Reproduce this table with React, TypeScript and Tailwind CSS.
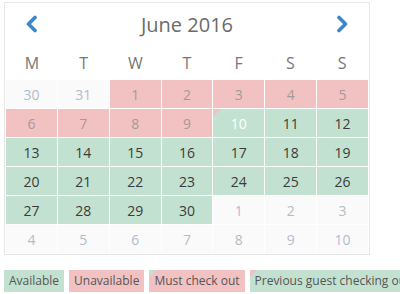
import React from "react";

type Kind = "other" | "unavail" | "avail" | "prevout";
type Cell = { d: number; k: Kind };

const rows: Cell[][] = [
  [
    { d: 30, k: "other" },
    { d: 31, k: "other" },
    { d: 1, k: "unavail" },
    { d: 2, k: "unavail" },
    { d: 3, k: "unavail" },
    { d: 4, k: "unavail" },
    { d: 5, k: "unavail" },
  ],
  [
    { d: 6, k: "unavail" },
    { d: 7, k: "unavail" },
    { d: 8, k: "unavail" },
    { d: 9, k: "unavail" },
    { d: 10, k: "prevout" },
    { d: 11, k: "avail" },
    { d: 12, k: "avail" },
  ],
  [13, 14, 15, 16, 17, 18, 19].map((d) => ({ d, k: "avail" as Kind })),
  [20, 21, 22, 23, 24, 25, 26].map((d) => ({ d, k: "avail" as Kind })),
  [
    { d: 27, k: "avail" },
    { d: 28, k: "avail" },
    { d: 29, k: "avail" },
    { d: 30, k: "avail" },
    { d: 1, k: "other" },
    { d: 2, k: "other" },
    { d: 3, k: "other" },
  ],
  [4, 5, 6, 7, 8, 9, 10].map((d) => ({ d, k: "other" as Kind })),
];

function DayCell({ c }: { c: Cell }) {
  if (c.k === "other")
    return (
      <div className="h-[28px] flex items-center justify-center bg-[#fafafa] text-[#b3bccb]">
        {c.d}
      </div>
    );
  if (c.k === "unavail")
    return (
      <div className="h-[28px] flex items-center justify-center bg-[#f2c2c2] text-[#a59a9a]">
        {c.d}
      </div>
    );
  if (c.k === "prevout")
    return (
      <div className="relative h-[28px] flex items-center justify-center bg-[#c3e1d0] text-white overflow-hidden">
        <div className="absolute left-0 top-0 w-0 h-0 border-t-[8px] border-t-[#f2c2c2] border-r-[8px] border-r-transparent" />
        <span className="relative">{c.d}</span>
      </div>
    );
  return (
    <div className="h-[28px] flex items-center justify-center bg-[#c3e1d0] text-[#3b3b3b]">
      {c.d}
    </div>
  );
}

export default function App() {
  return (
    <div
      className="bg-white w-[400px] h-[294px] overflow-hidden pt-[2px] pl-[4px]"
      style={{ fontFamily: '"Open Sans", sans-serif' }}
    >
      <div className="w-[366px] border border-[#e6e6e6] p-[1px] pt-0">
        <div className="h-[42px] flex items-center justify-between px-[19px]">
          <svg width="14" height="18" viewBox="0 0 14 18">
            <polyline
              points="10,2.5 3.5,9 10,15.5"
              fill="none"
              stroke="#3c87c9"
              strokeWidth="3.6"
              strokeLinecap="round"
              strokeLinejoin="round"
            />
          </svg>
          <div className="text-[20px] text-[#6b6b6b] leading-none pt-[2px]">June 2016</div>
          <svg width="14" height="18" viewBox="0 0 14 18">
            <polyline
              points="4,2.5 10.5,9 4,15.5"
              fill="none"
              stroke="#3c87c9"
              strokeWidth="3.6"
              strokeLinecap="round"
              strokeLinejoin="round"
            />
          </svg>
        </div>
        <div className="h-[35px] grid grid-cols-7 items-center text-center text-[16px] text-[#777]">
          {["M", "T", "W", "T", "F", "S", "S"].map((d, i) => (
            <div key={i}>{d}</div>
          ))}
        </div>
        <div className="grid grid-cols-7 gap-px text-[14px]">
          {rows.flat().map((c, i) => (
            <DayCell key={i} c={c} />
          ))}
        </div>
      </div>
      <div className="mt-[15px] flex gap-[5px] text-[12px] text-[#555] whitespace-nowrap">
        <div className="shrink-0 h-[22px] px-[5px] flex items-center bg-[#c3e1d0]">Available</div>
        <div className="shrink-0 h-[22px] px-[5px] flex items-center bg-[#f2c2c2]">Unavailable</div>
        <div className="shrink-0 relative h-[22px] px-[5px] flex items-center bg-[#f2c2c2] overflow-hidden">
          <div className="absolute left-0 top-0 w-0 h-0 border-t-[7px] border-t-[#c3e1d0] border-r-[7px] border-r-transparent" />
          <span className="relative">Must check out</span>
        </div>
        <div className="shrink-0 relative h-[22px] px-[5px] flex items-center bg-[#c3e1d0] overflow-hidden">
          <div className="absolute left-0 top-0 w-0 h-0 border-t-[7px] border-t-[#f2c2c2] border-r-[7px] border-r-transparent" />
          <span className="relative">Previous guest checking out</span>
        </div>
      </div>
    </div>
  );
}
